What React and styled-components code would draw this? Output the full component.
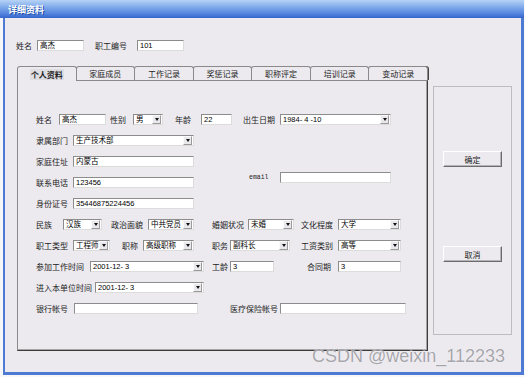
import styled, { createGlobalStyle } from "styled-components";

const GlobalStyle = createGlobalStyle`
  html, body {
    margin: 0;
    padding: 0;
    background: #f7f7f9;
  }
  body {
    font-family: "Noto Sans CJK SC", "Liberation Sans", sans-serif;
  }
`;

const Window = styled.div`
  width: 524px;
  height: 377px;
`;

const TitleBar = styled.div`
  height: 18px;
  box-sizing: border-box;
  padding-left: 8px;
  display: flex;
  align-items: center;
  color: #fff;
  font-size: 9px;
  font-weight: bold;
  text-shadow: 1px 1px 0 #1d4aa8;
  background: linear-gradient(
    to bottom,
    #b6d2f6 0%,
    #86afec 35%,
    #5b8ae0 70%,
    #3565cc 100%
  );
`;

const Frame = styled.div`
  position: relative;
  box-sizing: border-box;
  margin-left: 3px;
  width: 521px;
  height: 357px;
  background: #eceaef;
  border-left: 2px solid #4d7ad2;
  border-right: 3px solid #4d7ad2;
  border-bottom: 3px solid #4d7ad2;
  padding-top: 22px;
`;

const Row = styled.div`
  display: flex;
  align-items: center;
  height: 11px;
  margin-left: ${(p) => p.$ml || 0}px;
`;

const Label = styled.span`
  flex: 0 0 auto;
  width: ${(p) => p.$w}px;
  margin-left: ${(p) => p.$ml || 0}px;
  font-size: 8px;
  line-height: 11px;
  color: #1c1c1c;
  white-space: nowrap;
`;

const MonoLabel = styled(Label)`
  font-family: "Liberation Mono", "DejaVu Sans Mono", monospace;
  font-size: 6.5px;
`;

const TextBox = styled.div`
  flex: 0 0 auto;
  box-sizing: border-box;
  width: ${(p) => p.$w}px;
  height: 11px;
  margin-left: ${(p) => p.$ml || 0}px;
  background: #fff;
  border: 1px solid;
  border-color: #8c8c8c #dcdcdc #dcdcdc #8c8c8c;
  padding-left: 2px;
  font-family: "Liberation Sans", "Noto Sans CJK SC", sans-serif;
  font-size: 7.5px;
  line-height: 9px;
  color: #000;
  white-space: nowrap;
  overflow: hidden;
`;

const Combo = styled(TextBox)`
  display: flex;
  justify-content: space-between;
  padding-right: 1px;
`;

const DropButton = styled.span`
  flex: 0 0 auto;
  box-sizing: border-box;
  width: 9px;
  height: 9px;
  display: flex;
  align-items: center;
  justify-content: center;
  background: #e9e8ec;
  border: 1px solid;
  border-color: #fafafa #9a9a9a #9a9a9a #fafafa;

  &::after {
    content: "";
    border-left: 2.5px solid transparent;
    border-right: 2.5px solid transparent;
    border-top: 3px solid #111;
  }
`;

const Main = styled.div`
  display: flex;
  align-items: flex-start;
  gap: 5px;
  margin: 15px 0 0 12px;
`;

const TabControl = styled.div`
  width: 411px;
`;

const TabStrip = styled.div`
  display: flex;
  height: 14px;
  position: relative;
  z-index: 1;
`;

const Tab = styled.div`
  flex: 1;
  box-sizing: border-box;
  height: ${(p) => (p.$active ? 15 : 14)}px;
  border: 1px solid #8a8a8a;
  border-bottom: none;
  border-radius: 3px 3px 0 0;
  margin-left: ${(p) => (p.$first ? 0 : -1)}px;
  background: #eceaef;
  display: flex;
  align-items: center;
  justify-content: center;
  font-size: 8px;
  font-weight: ${(p) => (p.$active ? "bold" : "normal")};
  color: #1c1c1c;
  box-shadow: ${(p) => (p.$last ? "1px 0 0 #444" : "none")};
`;

const ActiveCaption = styled.span`
  background: #dedde2;
  padding: 0 1px;
`;

const Pane = styled.div`
  box-sizing: border-box;
  height: 271px;
  border: 1px solid #8a8a8a;
  border-right-color: #3c3c3c;
  border-bottom-color: #3c3c3c;
  box-shadow: inset -1px -1px 0 #a6a6a6;
  padding: 33px 0 0 18px;
  display: flex;
  flex-direction: column;
  gap: 10px;
`;

const Raised = styled.div`
  display: flex;
  align-items: center;
  margin-left: ${(p) => p.$ml}px;
  margin-bottom: 10px;
`;

const SidePanel = styled.div`
  box-sizing: border-box;
  width: 79px;
  height: 249px;
  margin-top: 20px;
  border: 1px solid #bdbcc0;
  padding: 64px 0 0 9px;
  display: flex;
  flex-direction: column;
  gap: 79px;
`;

const Button = styled.div`
  box-sizing: border-box;
  width: 59px;
  height: 16px;
  display: flex;
  align-items: center;
  justify-content: center;
  font-size: 8px;
  color: #1c1c1c;
  background: #eceaef;
  border: 1px solid;
  border-color: #fff #6c6c6c #6c6c6c #fff;
  box-shadow: inset -1px -1px 0 #b4b3b8;
`;

const Watermark = styled.div`
  position: absolute;
  left: 307px;
  top: 328px;
  font-family: "Liberation Sans", Arial, sans-serif;
  font-size: 18px;
  color: rgba(150, 150, 155, 0.85);
  text-shadow: 0 0 1px #fff;
  white-space: nowrap;
`;

const tabs = ["个人资料", "家庭成员", "工作记录", "奖惩记录", "职称评定", "培训记录", "变动记录"];

function Select({ w, ml, value }) {
  return (
    <Combo $w={w} $ml={ml}>
      <span>{value}</span>
      <DropButton />
    </Combo>
  );
}

export default function App() {
  return (
    <>
      <GlobalStyle />
      <Window>
        <TitleBar>详细资料</TitleBar>
        <Frame>
          <Row $ml={11}>
            <Label $w={21}>姓名</Label>
            <TextBox $w={47}>高杰</TextBox>
            <Label $ml={11} $w={42}>职工编号</Label>
            <TextBox $w={47}>101</TextBox>
          </Row>

          <Main>
            <TabControl>
              <TabStrip>
                {tabs.map((t, i) => (
                  <Tab key={t} $active={i === 0} $first={i === 0} $last={i === tabs.length - 1}>
                    {i === 0 ? <ActiveCaption>{t}</ActiveCaption> : t}
                  </Tab>
                ))}
              </TabStrip>
              <Pane>
                <Row>
                  <Label $w={23}>姓名</Label>
                  <TextBox $w={47}>高杰</TextBox>
                  <Label $ml={4} $w={23}>性别</Label>
                  <Select w={30} value="男" />
                  <Label $ml={12} $w={26}>年龄</Label>
                  <TextBox $w={31}>22</TextBox>
                  <Label $ml={11} $w={37}>出生日期</Label>
                  <Select w={111} value="1984- 4 -10" />
                </Row>
                <Row>
                  <Label $w={37}>隶属部门</Label>
                  <Select w={121} value="生产技术部" />
                </Row>
                <Row>
                  <Label $w={37}>家庭住址</Label>
                  <TextBox $w={121}>内蒙古</TextBox>
                </Row>
                <Row>
                  <Label $w={37}>联系电话</Label>
                  <TextBox $w={121}>123456</TextBox>
                  <Raised $ml={55}>
                    <MonoLabel $w={31}>email</MonoLabel>
                    <TextBox $w={111} />
                  </Raised>
                </Row>
                <Row>
                  <Label $w={37}>身份证号</Label>
                  <TextBox $w={121}>35446875224456</TextBox>
                </Row>
                <Row>
                  <Label $w={27}>民族</Label>
                  <Select w={39} value="汉族" />
                  <Label $ml={9} $w={37}>政治面貌</Label>
                  <Select w={46} value="中共党员" />
                  <Label $ml={18} $w={36}>婚姻状况</Label>
                  <Select w={46} value="未婚" />
                  <Label $ml={7} $w={37}>文化程度</Label>
                  <Select w={63} value="大学" />
                </Row>
                <Row>
                  <Label $w={37}>职工类型</Label>
                  <Select w={37} value="工程师" />
                  <Label $ml={12} $w={21}>职称</Label>
                  <Select w={51} value="高级职称" />
                  <Label $ml={18} $w={18}>职务</Label>
                  <Select w={60} value="副科长" />
                  <Label $ml={11} $w={37}>工资类别</Label>
                  <Select w={63} value="高等" />
                </Row>
                <Row>
                  <Label $w={54}>参加工作时间</Label>
                  <Select w={114} value="2001-12- 3" />
                  <Label $ml={8} $w={18}>工龄</Label>
                  <TextBox $w={44}>3</TextBox>
                  <Label $ml={33} $w={31}>合同期</Label>
                  <TextBox $w={63}>3</TextBox>
                </Row>
                <Row>
                  <Label $w={59}>进入本单位时间</Label>
                  <Select w={109} value="2001-12- 3" />
                </Row>
                <Row>
                  <Label $w={38}>银行帐号</Label>
                  <TextBox $w={124} />
                  <Label $ml={32} $w={50}>医疗保险帐号</Label>
                  <TextBox $w={126} />
                </Row>
              </Pane>
            </TabControl>

            <SidePanel>
              <Button>确定</Button>
              <Button>取消</Button>
            </SidePanel>
          </Main>

          <Watermark>CSDN @weixin_112233</Watermark>
        </Frame>
      </Window>
    </>
  );
}
